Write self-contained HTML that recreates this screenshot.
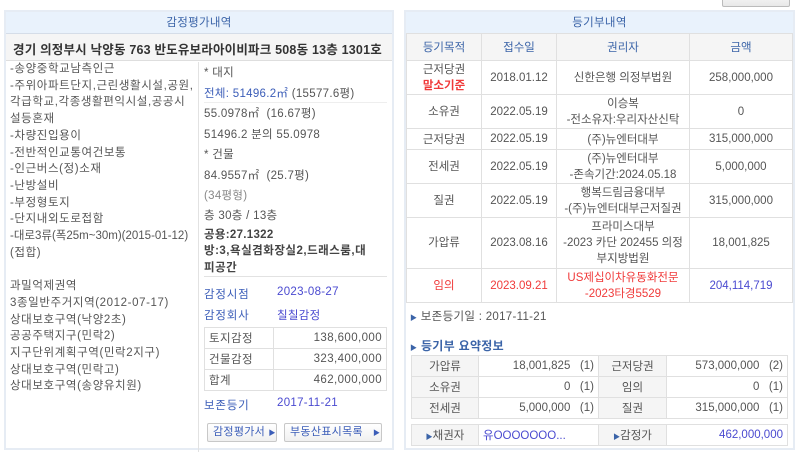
<!DOCTYPE html>
<html><head><meta charset="utf-8">
<style>
*{margin:0;padding:0;box-sizing:border-box}
body{width:800px;height:444px;overflow:hidden;background:#fff;font-family:"Liberation Sans","Noto Sans CJK KR",sans-serif;font-size:11.5px;color:#555;position:relative;letter-spacing:0.3px}
.a{position:absolute;white-space:nowrap}
.panel{position:absolute;top:10px;border:2px solid #e6ecf4;background:#fff;height:440px}
.hd{position:absolute;left:0;right:0;top:0;height:22px;background:#e9f2fc;border-bottom:1px solid #d5dde8;color:#3b64a8;text-align:center;line-height:22px;font-size:11.5px}
.c{text-align:center}
.r{text-align:right}
.b{color:#3b5db8}
.lk{color:#4a4ad0}
.red{color:#f03a3a}
.hl{position:absolute;height:1px;background:#e2e2e2}
.vl{position:absolute;width:1px;background:#e2e2e2}
table{border-collapse:collapse;position:absolute;letter-spacing:0;table-layout:fixed}
td{border:1px solid #e0e0e0;padding:0 4px;height:21px;white-space:nowrap;overflow:hidden}
</style></head><body>

<div class="a" style="left:722px;top:-12px;width:68px;height:19px;border:1px solid #bbb;border-radius:2px;background:linear-gradient(#fff,#e8e8e8)"></div>

<!-- LEFT PANEL -->
<div class="panel" style="left:4px;width:390px">
 <div class="hd">감정평가내역</div>
 <div class="a" style="left:0;right:0;top:22px;height:27px;background:#f5f5f5;border-bottom:1px solid #dedede"></div>
 <div class="a" style="left:7px;top:27px;font-weight:bold;font-size:12.5px;color:#333;letter-spacing:0.2px">경기 의정부시 낙양동 763 반도유보라아이비파크 508동 13층 1301호</div>
 <div class="vl" style="left:192px;top:50px;height:390px"></div>
</div>
<div class="a" style="left:10px;top:61px;line-height:16.7px;font-size:11.5px;letter-spacing:0.6px">-송양중학교남측인근<br>-주위아파트단지,근린생활시설,공원,<br>각급학교,각종생활편익시설,공공시<br>설등혼재<br>-차량진입용이<br>-전반적인교통여건보통<br>-인근버스(정)소재<br>-난방설비<br>-부정형토지<br>-단지내외도로접함<br><span style="letter-spacing:0">-대로3류(폭25m~30m)(2015-01-12)</span><br>(접합)<br><br>과밀억제권역<br>3종일반주거지역(2012-07-17)<br>상대보호구역(낙양2초)<br>공공주택지구(민락2)<br>지구단위계획구역(민락2지구)<br>상대보호구역(민락고)<br>상대보호구역(송양유치원)</div>

<div class="a" style="left:204px;top:64px">* 대지</div>
<div class="a" style="left:204px;top:85px"><span class="b">전체: 51496.2㎡</span> (15577.6평)</div>
<div class="hl" style="left:204px;top:102px;width:183px;background:#eee"></div>
<div class="a" style="left:204px;top:105px">55.0978㎡ &nbsp;(16.67평)</div>
<div class="a" style="left:204px;top:126px">51496.2 분의 55.0978</div>
<div class="a" style="left:204px;top:146px">* 건물</div>
<div class="a" style="left:204px;top:167px">84.9557㎡ &nbsp;(25.7평)</div>
<div class="a" style="left:204px;top:187px;color:#888">(34평형)</div>
<div class="a" style="left:204px;top:207px">층 30층 / 13층</div>
<div class="a" style="left:204px;top:226px;font-weight:bold;color:#444">공용:27.1322</div>
<div class="a" style="left:204px;top:243px;font-weight:bold;color:#444;line-height:17px;letter-spacing:0.5px">방:3,욕실겸화장실2,드래스룸,대<br>피공간</div>
<div class="hl" style="left:204px;top:276px;width:183px"></div>
<div class="a b" style="left:204px;top:286px;letter-spacing:0.8px">감정시점</div><div class="a lk" style="left:277px;top:286px">2023-08-27</div>
<div class="a b" style="left:204px;top:307px;letter-spacing:0.8px">감정회사</div><div class="a lk" style="left:277px;top:307px">칠칠감정</div>
<table style="left:204px;top:327px;width:183px;letter-spacing:0.4px">
<tr><td style="width:69px">토지감정</td><td class="r">138,600,000</td></tr>
<tr><td>건물감정</td><td class="r">323,400,000</td></tr>
<tr><td>합계</td><td class="r">462,000,000</td></tr>
</table>
<div class="a b" style="left:204px;top:397px;letter-spacing:0.8px">보존등기</div><div class="a lk" style="left:277px;top:397px">2017-11-21</div>
<div class="a" style="left:207px;top:423px;width:70px;height:19px;border:1px solid #c8c8c8;border-radius:2px;background:linear-gradient(#fff,#f0f0f0);color:#3b5db8;font-size:11px;line-height:17px;padding-left:5px">감정평가서 <span style="font-size:7px">▶</span></div>
<div class="a" style="left:284px;top:423px;width:98px;height:19px;border:1px solid #c8c8c8;border-radius:2px;background:linear-gradient(#fff,#f0f0f0);color:#3b5db8;font-size:11px;line-height:17px;padding-left:5px">부동산표시목록 &nbsp;&nbsp;<span style="font-size:7px">▶</span></div>

<!-- RIGHT PANEL -->
<div class="panel" style="left:404px;width:391px">
 <div class="hd">등기부내역</div>
</div>
<table style="left:406px;top:33px;width:387px;font-size:11.5px;color:#555">
<tr style="height:27px;background:#f5f5f5;color:#3b64a8" class="c"><td style="width:75px;height:27px">등기목적</td><td style="width:75px">접수일</td><td style="width:133px">권리자</td><td>금액</td></tr>
<tr class="c" style="height:34px;line-height:16px"><td>근저당권<br><b class="red">말소기준</b></td><td>2018.01.12</td><td>신한은행 의정부법원</td><td>258,000,000</td></tr>
<tr class="c" style="height:34px;line-height:16px"><td>소유권</td><td>2022.05.19</td><td>이승복<br>-전소유자:우리자산신탁</td><td>0</td></tr>
<tr class="c" style="height:21px"><td>근저당권</td><td>2022.05.19</td><td>(주)뉴엔터대부</td><td>315,000,000</td></tr>
<tr class="c" style="height:34px;line-height:16px"><td>전세권</td><td>2022.05.19</td><td>(주)뉴엔터대부<br>-존속기간:2024.05.18</td><td>5,000,000</td></tr>
<tr class="c" style="height:34px;line-height:16px"><td>질권</td><td>2022.05.19</td><td>행복드림금융대부<br>-(주)뉴엔터대부근저질권</td><td>315,000,000</td></tr>
<tr class="c" style="height:51px;line-height:16px"><td>가압류</td><td>2023.08.16</td><td>프라미스대부<br>-2023 카단 202455 의정<br>부지방법원</td><td>18,001,825</td></tr>
<tr class="c red" style="height:34px;line-height:16px"><td>임의</td><td>2023.09.21</td><td>US제십이차유동화전문<br>-2023타경5529</td><td class="lk">204,114,719</td></tr>
</table>
<div class="a" style="left:410px;top:308px"><span style="color:#3b64a8;font-size:7px">▶</span> 보존등기일 : 2017-11-21</div>
<div class="a" style="left:410px;top:337px;font-weight:bold;color:#3b64a8;font-size:12px"><span style="font-size:7px">▶</span> 등기부 요약정보</div>
<table style="left:411px;top:355px;width:377px;font-size:11.5px">
<tr><td class="c" style="width:67px;background:#f5f5f5">가압류</td><td class="r" style="width:120px">18,001,825 &nbsp;&nbsp;(1)</td><td class="c" style="width:68px;background:#f5f5f5">근저당권</td><td class="r">573,000,000 &nbsp;&nbsp;(2)</td></tr>
<tr><td class="c" style="background:#f5f5f5">소유권</td><td class="r">0 &nbsp;&nbsp;(1)</td><td class="c" style="background:#f5f5f5">임의</td><td class="r">0 &nbsp;&nbsp;(1)</td></tr>
<tr><td class="c" style="background:#f5f5f5">전세권</td><td class="r">5,000,000 &nbsp;&nbsp;(1)</td><td class="c" style="background:#f5f5f5">질권</td><td class="r">315,000,000 &nbsp;&nbsp;(1)</td></tr>
</table>
<table style="left:411px;top:424px;width:377px;font-size:11.5px">
<tr><td class="c" style="width:67px;background:#f5f5f5"><span style="font-size:7px;color:#3b64a8">▶</span>채권자</td><td class="lk" style="width:120px">유OOOOOOO...</td><td class="c" style="width:68px;background:#f5f5f5"><span style="font-size:7px;color:#3b64a8">▶</span>감정가</td><td class="r lk">462,000,000</td></tr>
</table>
</body></html>
